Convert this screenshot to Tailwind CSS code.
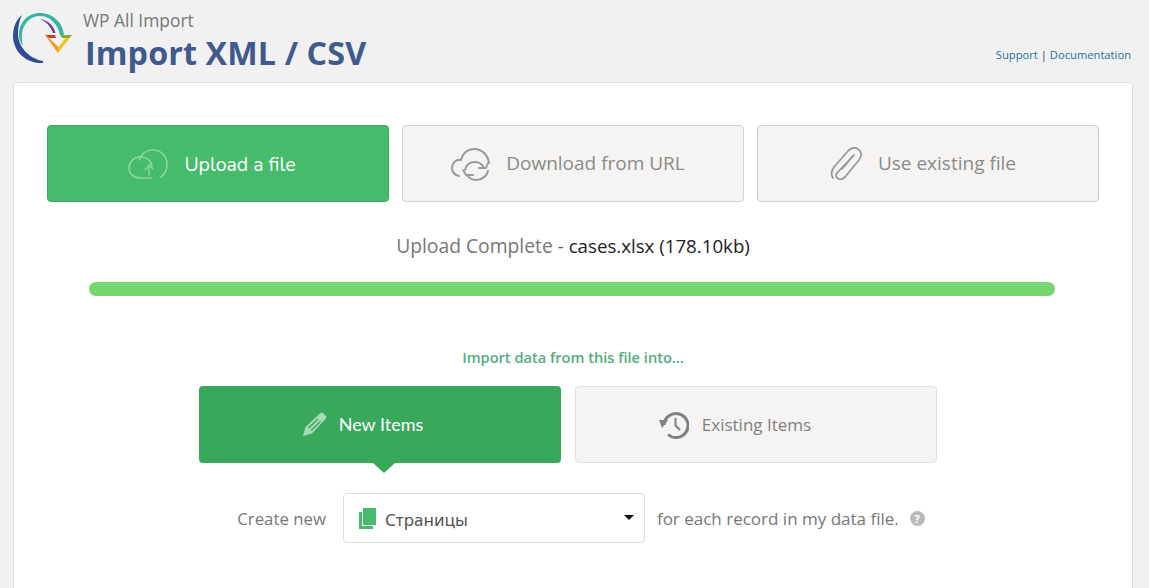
<!DOCTYPE html>
<html>
<head>
<meta charset="utf-8">
<script src="https://cdn.jsdelivr.net/npm/@tailwindcss/browser@4"></script>
</head>
<body class="h-[588px] overflow-hidden bg-[#f1f1f1] font-['Open_Sans',sans-serif]">
<div class="flex flex-col pl-[13px] pr-[16px] h-full">
  <header class="h-[82px] shrink-0 flex relative">
    <svg class="absolute left-0 top-[12px] w-[60px] h-[52px]" viewBox="0 0 60 52" fill="none">
      <path d="M9 3C3 8 0 15 0 24C0 39 13 52 30 51L30 49C18 47 6 37 5 23C5 15 6 9 9 3Z" fill="#2f4c99"/>
      <path d="M10 34C7 30 6 27 6 23C6 10 15 1 27 1C39 1 50 10 51 23L47 23C45 12 37 4 27 4C17 4 10 12 9 22C8.500 26 9 30 10 34Z" fill="#37b3a8"/>
      <path d="M27 7C35 8 41 14 42.500 21L40 21C38 15 33 9 27 7Z" fill="#6b3d97"/>
      <path d="M32 23L42 23L43 26L36 26Z" fill="#d83a2e"/>
      <path d="M32 23L45 41L47.500 37L36 26Z" fill="#f29c1f"/>
      <path d="M45 41L59 23L54 24L45.500 35Z" fill="#f2c21f"/>
      <path d="M47 23L59 23L56 26L49 26Z" fill="#7cb342"/>
    </svg>
    <div class="ml-[72px] flex flex-col">
      <div class="text-[17.4px] leading-[20px] mt-[10px] -ml-[2px] text-[#777777]">WP All Import</div>
      <h1 class="text-[32.3px] leading-[36px] mt-[4px] font-bold text-[#40598f] tracking-[0.1px]">Import XML / CSV</h1>
    </div>
    <div class="ml-auto mr-[2px] mt-[47px] text-[11.2px] leading-[16px] text-[#2a6f9e]">Support <span class="text-[#444444]">|</span> Documentation</div>
  </header>
  <main class="h-[520px] shrink-0 bg-white border border-[#dfdfdf] rounded-t-[4px] px-[33px] pt-[42px] flex flex-col items-stretch">
    <div class="grid grid-cols-3 gap-[13px] w-[1052px]">
      <div class="h-[77px] rounded-[4px] bg-[#46bb6b] border border-[#3fa560] flex items-center justify-center gap-[16px] pr-[12px] text-white text-[19.5px] font-['Nunito',Lato,sans-serif]">
        <svg class="w-[40px] h-[30px] text-[#86d8a0]" viewBox="0 0 40 30" fill="none" stroke="currentColor" stroke-width="1.700" stroke-linecap="round">
          <path d="M33 28C37 25 39 20 39 15C39 7 33 1 25 1C18 1 13 5 11 11"/>
          <path d="M23 29L13 29C6 29 1 25 1 19C1 13 6 8 12 8C18 8 23 11 24 17"/>
          <path d="M17 21L21 16L25 20M21 16V26" stroke-width="1.400"/>
        </svg>
        <span class="mt-[3px]">Upload a file</span>
      </div>
      <div class="h-[77px] rounded-[4px] bg-[#f5f4f2] border border-[#cfcfcf] flex items-center justify-center gap-[15px] pr-[10px] text-[#8a8a8a] text-[19px]">
        <svg class="w-[40px] h-[34px]" viewBox="0 0 40 34" fill="none" stroke="#999999" stroke-width="2" stroke-linecap="round">
          <path d="M8 29C4 28 1 25 1 21C1 16 5 12 10 13C12 6 17 2 23 2C31 2 37 8 38 16"/>
          <path d="M14 23C15 18 19 15 24 15C28 15 31 17 33 21M37 24C36 29 31 33 25 33C21 33 18 31 16 28"/>
          <path d="M28 21H35L37 16M12 23L15 28H22" stroke-width="1.800"/>
        </svg>
        <span>Download from URL</span>
      </div>
      <div class="h-[77px] rounded-[4px] bg-[#f5f4f2] border border-[#cfcfcf] flex items-center justify-center gap-[15px] pr-[10px] text-[#8a8a8a] text-[19px]">
        <svg class="w-[33px] h-[34px]" viewBox="0 0 33 34" fill="none" stroke="#999999" stroke-width="1.800" stroke-linecap="round" stroke-linejoin="round">
          <path d="M24 8L7 26C5 28 6 31 9 32C11 33 13 32 15 30L29 13C33 8 31 4 28 2C25 0 21 1 18 4L4 20C1 24 1 28 3 31"/>
          <path d="M23 9L12 22"/>
        </svg>
        <span>Use existing file</span>
      </div>
    </div>
    <div class="mt-[31px] text-center text-[19.3px] leading-[26px] text-[#777777]">Upload Complete <span class="text-[#222222] text-[18.7px]"><span class="text-[#555555]">-</span> cases.xlsx (178.10kb)</span></div>
    <div class="mt-[23px] ml-[42px] mr-[44px] h-[14px] rounded-full bg-[#76d771]"></div>
    <div class="mt-[51px] text-center text-[14.6px] leading-[20px] font-semibold text-[#52ae7d]">Import data from this file into...</div>
    <div class="mt-[19px] flex justify-center gap-[14px] pr-[10px]">
      <div class="relative w-[362px] h-[77px] rounded-[4px] bg-[#39a85b] flex items-center justify-center gap-[12px] pr-[35px] text-white text-[18px] font-['Lato',sans-serif]">
        <svg class="w-[25px] h-[25px] text-[#a5dcb6]" viewBox="0 0 25 25" fill="currentColor">
          <path d="M1 24L3.500 15L18 1.500C19 .5 20.500 .5 21.500 1.500L23.500 3.500C24.500 4.500 24.500 6 23.500 7L10 21.500ZM6 15.500L15.500 6.500L16.500 7.500L7 16.500ZM8.500 18L18 9L19 10L9.500 19Z" fill-rule="evenodd"/>
        </svg>
        <span>New Items</span>
        <div class="absolute left-[174px] top-full w-0 h-0 border-x-[11px] border-x-transparent border-t-[10px] border-t-[#39a85b]"></div>
      </div>
      <div class="w-[362px] h-[77px] rounded-[4px] bg-[#f5f4f2] border border-[#e2e0dc] flex items-center justify-center gap-[13px] pr-[42px] text-[#808080] text-[17px]">
        <svg class="w-[30px] h-[28px]" viewBox="0 0 30 28" fill="none" stroke="#808080" stroke-width="3">
          <path d="M5 14A12 12 0 1 1 9 23.500"/>
          <path d="M0 9L9 9L3 17Z" fill="#808080" stroke="none"/>
          <path d="M16.500 7V14.500L21 19" stroke-width="2"/>
        </svg>
        <span>Existing Items</span>
      </div>
    </div>
    <div class="mt-[30px] flex items-center justify-center gap-[12px] pl-[16px] text-[17px] text-[#777777]">
      <span class="mr-[5px] text-[16.8px] mt-[1px]">Create new</span>
      <div class="w-[302px] h-[50px] rounded-[4px] border border-[#dddddd] bg-white flex items-center pl-[15px] pr-[10px] text-[#555555]">
        <svg class="w-[17px] h-[21px] shrink-0" viewBox="0 0 17 21">
          <rect x="4" y="0" width="13" height="17" fill="#46bb6b"/>
          <path d="M0 4H3V18H14V21H0Z" fill="#46bb6b"/>
        </svg>
        <span class="ml-[9px] mt-[4px] font-['Noto_Sans',sans-serif]">Страницы</span>
        <div class="ml-auto w-0 h-0 border-x-[5px] border-x-transparent border-t-[5px] border-t-[#111111] -mt-[1px]"></div>
      </div>
      <span class="mt-[1px]">for each record in my data file.</span>
      <span class="w-[15px] h-[15px] -ml-[1px] rounded-full bg-[#bbbbbb] text-white text-[11px] font-bold leading-[15px] text-center">?</span>
    </div>
  </main>
</div>
</body>
</html>
